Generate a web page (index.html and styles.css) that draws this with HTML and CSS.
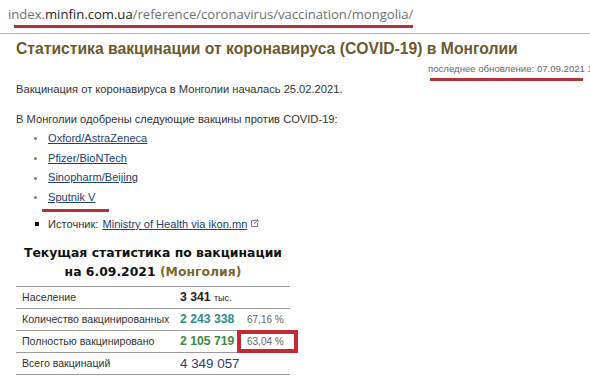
FILE: index.html
```html
<!DOCTYPE html>
<html lang="ru">
<head>
  <meta charset="UTF-8" />
  <title>Статистика вакцинации от коронавируса (COVID-19) в Монголии</title>
  <link rel="stylesheet" href="styles.css">
</head>
<body>
  <div class="address">
    <span class="url marked">index.<b>minfin.com.ua</b>/reference/coronavirus/vaccination/mongolia/</span>
  </div>

  <div class="page">
    <h1>Статистика вакцинации от коронавируса (COVID-19) в Монголии</h1>
    <div class="updated"><span class="mark-line"></span>последнее обновление: 07.09.2021 15:12</div>

    <p>Вакцинация от коронавируса в Монголии началась 25.02.2021.</p>
    <p>В Монголии одобрены следующие вакцины против COVID-19:</p>

    <ul class="vaccines">
      <li><a href="#">Oxford/AstraZeneca</a></li>
      <li><a href="#">Pfizer/BioNTech</a></li>
      <li><a href="#">Sinopharm/Beijing</a></li>
      <li><a href="#" class="marked">Sputnik V</a></li>
    </ul>

    <ul class="source">
      <li>Источник: <a href="#">Ministry of Health via ikon.mn</a>
        <svg class="ext" width="9" height="9" viewBox="0 0 9 9">
          <path d="M6 1.5H1.5v6h6V4" fill="none" stroke="#8a6f98" stroke-width="1"/>
          <path d="M4 5 8 1M5.5 1H8v2.5" fill="none" stroke="#8a6f98" stroke-width="1"/>
        </svg>
      </li>
    </ul>

    <h2>Текущая статистика по вакцинации<br>на 6.09.2021 <span class="country">(Монголия)</span></h2>

    <table class="stats">
      <tr>
        <td class="label">Население</td>
        <td class="num">3 341 <small>тыс.</small></td>
        <td class="pct"></td>
      </tr>
      <tr>
        <td class="label">Количество вакцинированных</td>
        <td class="num teal">2 243 338</td>
        <td class="pct">67,16 %</td>
      </tr>
      <tr>
        <td class="label">Полностью вакцинировано</td>
        <td class="num green">2 105 719</td>
        <td class="pct boxed">63,04 %</td>
      </tr>
      <tr>
        <td class="label">Всего вакцинаций</td>
        <td class="num total">4 349 057</td>
        <td class="pct"></td>
      </tr>
    </table>
  </div>
</body>
</html>
```

FILE: styles.css
```css
* { margin: 0; padding: 0; box-sizing: border-box; }

body {
  font-family: 'Liberation Sans', Arial, sans-serif;
  color: #333;
  background: #fff;
  width: 590px;
  height: 378px;
  overflow: hidden;
}

/* address bar strip */
.address {
  height: 34px;
  padding: 4px 0 0 8px;
  border-bottom: 1px solid #b4b4b4;
}

.url {
  font-family: 'Open Sans', sans-serif;
  font-size: 13.1px;
  line-height: 20px;
  color: #6f6f6f;
  white-space: nowrap;
}

.url b {
  font-weight: normal;
  color: #222;
}

/* red annotation lines */
.marked {
  position: relative;
}

.marked::after {
  content: '';
  position: absolute;
  left: 6px;
  right: 0;
  bottom: -5px;
  height: 3px;
  background: #b3323c;
}

.page {
  padding: 5px 0 0 16px;
}

h1 {
  font-size: 15.7px;
  line-height: 20px;
  color: #6b5a2c;
  white-space: nowrap;
}

.updated {
  position: relative;
  margin: 3px 0 0 412px;
  font-size: 9.6px;
  line-height: 13px;
  color: #666;
  white-space: nowrap;
}

.mark-line {
  position: absolute;
  left: 2px;
  bottom: -6px;
  width: 153px;
  height: 3px;
  background: #b3323c;
}

p {
  font-size: 11.15px;
  line-height: 16px;
  color: #333;
  white-space: nowrap;
}

.updated + p { margin-top: 6px; }
p + p { margin-top: 14px; }

ul {
  list-style: none;
}

.vaccines {
  margin-top: 2px;
  padding-left: 18px;
}

.vaccines li {
  font-size: 11.1px;
  line-height: 19.7px;
  display: flex;
  align-items: center;
  gap: 11px;
}

.vaccines li::before {
  content: '';
  width: 3px;
  height: 3px;
  border-radius: 50%;
  background: #8c7a55;
}

a {
  color: #23406e;
}

.vaccines .marked::after {
  left: -6px;
  right: -14px;
  bottom: -4px;
}

.source {
  margin-top: 8px;
  padding-left: 19px;
}

.source li {
  font-size: 11.1px;
  line-height: 16px;
  display: flex;
  align-items: center;
  gap: 9px;
  white-space: nowrap;
}

.source li::before {
  content: '';
  width: 4px;
  height: 4px;
  background: #111;
}

.source a {
  margin-left: -5px;
}

.ext {
  margin-left: -6px;
}

h2 {
  width: 274px;
  margin-top: 11px;
  font-family: 'DejaVu Sans', sans-serif;
  font-size: 12.4px;
  line-height: 19px;
  text-align: center;
  color: #111;
  white-space: nowrap;
}

.country {
  color: #7a6633;
}

.stats {
  margin-top: 5px;
  width: 274px;
  border-collapse: collapse;
  table-layout: fixed;
}

.stats td {
  height: 22px;
  border-top: 1px solid #9a9a9a;
  border-bottom: 1px solid #9a9a9a;
  white-space: nowrap;
}

.label {
  width: 153px;
  padding-left: 6px;
  font-size: 10.6px;
  color: #333;
}

.num {
  width: 72px;
  padding-left: 11px;
  font-size: 12.2px;
  font-weight: bold;
  color: #222;
}

.num small {
  font-size: 9px;
  font-weight: normal;
}

.teal { color: #2e8c8a; }
.green { color: #3d8a3b; }

.total {
  font-weight: normal;
  font-size: 13.4px;
  color: #2f3d6a;
}

.pct {
  width: 49px;
  padding-left: 6px;
  font-size: 10px;
  color: #666;
}

.boxed {
  position: relative;
}

.boxed::after {
  content: '';
  position: absolute;
  top: -1px;
  bottom: -1px;
  left: -4px;
  right: -8px;
  border: 4px solid #c02b36;
}
```
